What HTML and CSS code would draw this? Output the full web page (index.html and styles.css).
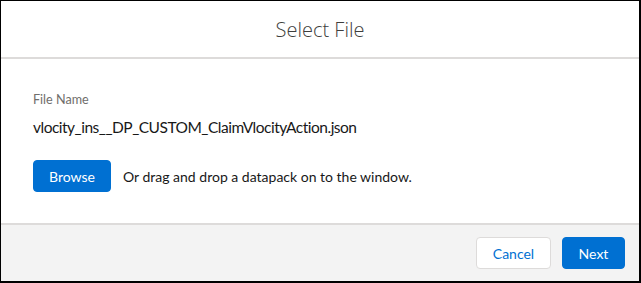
FILE: index.html
```html
<!DOCTYPE html>
<html>
<head>
<meta charset="utf-8">
<link rel="stylesheet" href="styles.css">
</head>
<body>
<div class="modal">
  <header class="modal-header">
    <h2 class="title">Select File</h2>
  </header>
  <section class="modal-body">
    <div class="label">File Name</div>
    <div class="filename">vlocity_ins__DP_CUSTOM_ClaimVlocityAction.json</div>
    <div class="browse-row">
      <button class="btn btn-brand browse">Browse</button>
      <span class="hint">Or drag and drop a datapack on to the window.</span>
    </div>
  </section>
  <footer class="modal-footer">
    <button class="btn btn-neutral cancel">Cancel</button>
    <button class="btn btn-brand next">Next</button>
  </footer>
</div>
</body>
</html>
```
FILE: styles.css
```css
* { box-sizing: border-box; }
html, body { margin: 0; padding: 0; }
body {
  font-family: "Lato", "Open Sans", sans-serif;
  color: #3e3e3c;
  background: #fff;
}
.modal {
  width: 641px;
  height: 283px;
  border-style: solid;
  border-color: #000;
  border-width: 1px 2px 2px 1px;
  display: flex;
  flex-direction: column;
}
.modal-header {
  height: 58px;
  border-bottom: 2px solid #dddbda;
  display: flex;
  align-items: center;
  justify-content: center;
}
.title {
  margin: 0;
  font-family: "Open Sans", sans-serif;
  font-size: 20px;
  font-weight: 300;
  color: #3e3e3c;
}
.modal-body {
  flex: 1;
  padding: 32px 32px 0 32px;
}
.label {
  font-size: 12.6px;
  color: #706e6b;
  line-height: 18px;
}
.filename {
  font-size: 15.5px;
  letter-spacing: -0.5px;
  line-height: 24px;
  margin-top: 6px;
  color: #181818;
}
.browse-row {
  display: flex;
  align-items: center;
  gap: 12px;
  margin-top: 21px;
}
.hint { font-size: 14px; color: #181818; }
.btn {
  height: 32px;
  border-radius: 4px;
  font-family: inherit;
  font-size: 14px;
  padding: 0;
  border: 1px solid #0070d2;
  cursor: pointer;
}
.btn-brand { background: #0070d2; color: #fff; }
.btn-neutral { background: #fff; color: #0070d2; border-color: #dddbda; }
.browse { width: 78px; }
.cancel { width: 75px; }
.next { width: 63px; }
.modal-footer {
  height: 58px;
  border-top: 2px solid #dddbda;
  background: #f3f3f3;
  display: flex;
  justify-content: flex-end;
  align-items: center;
  gap: 11px;
  padding: 0 14px 0 0;
}
```
